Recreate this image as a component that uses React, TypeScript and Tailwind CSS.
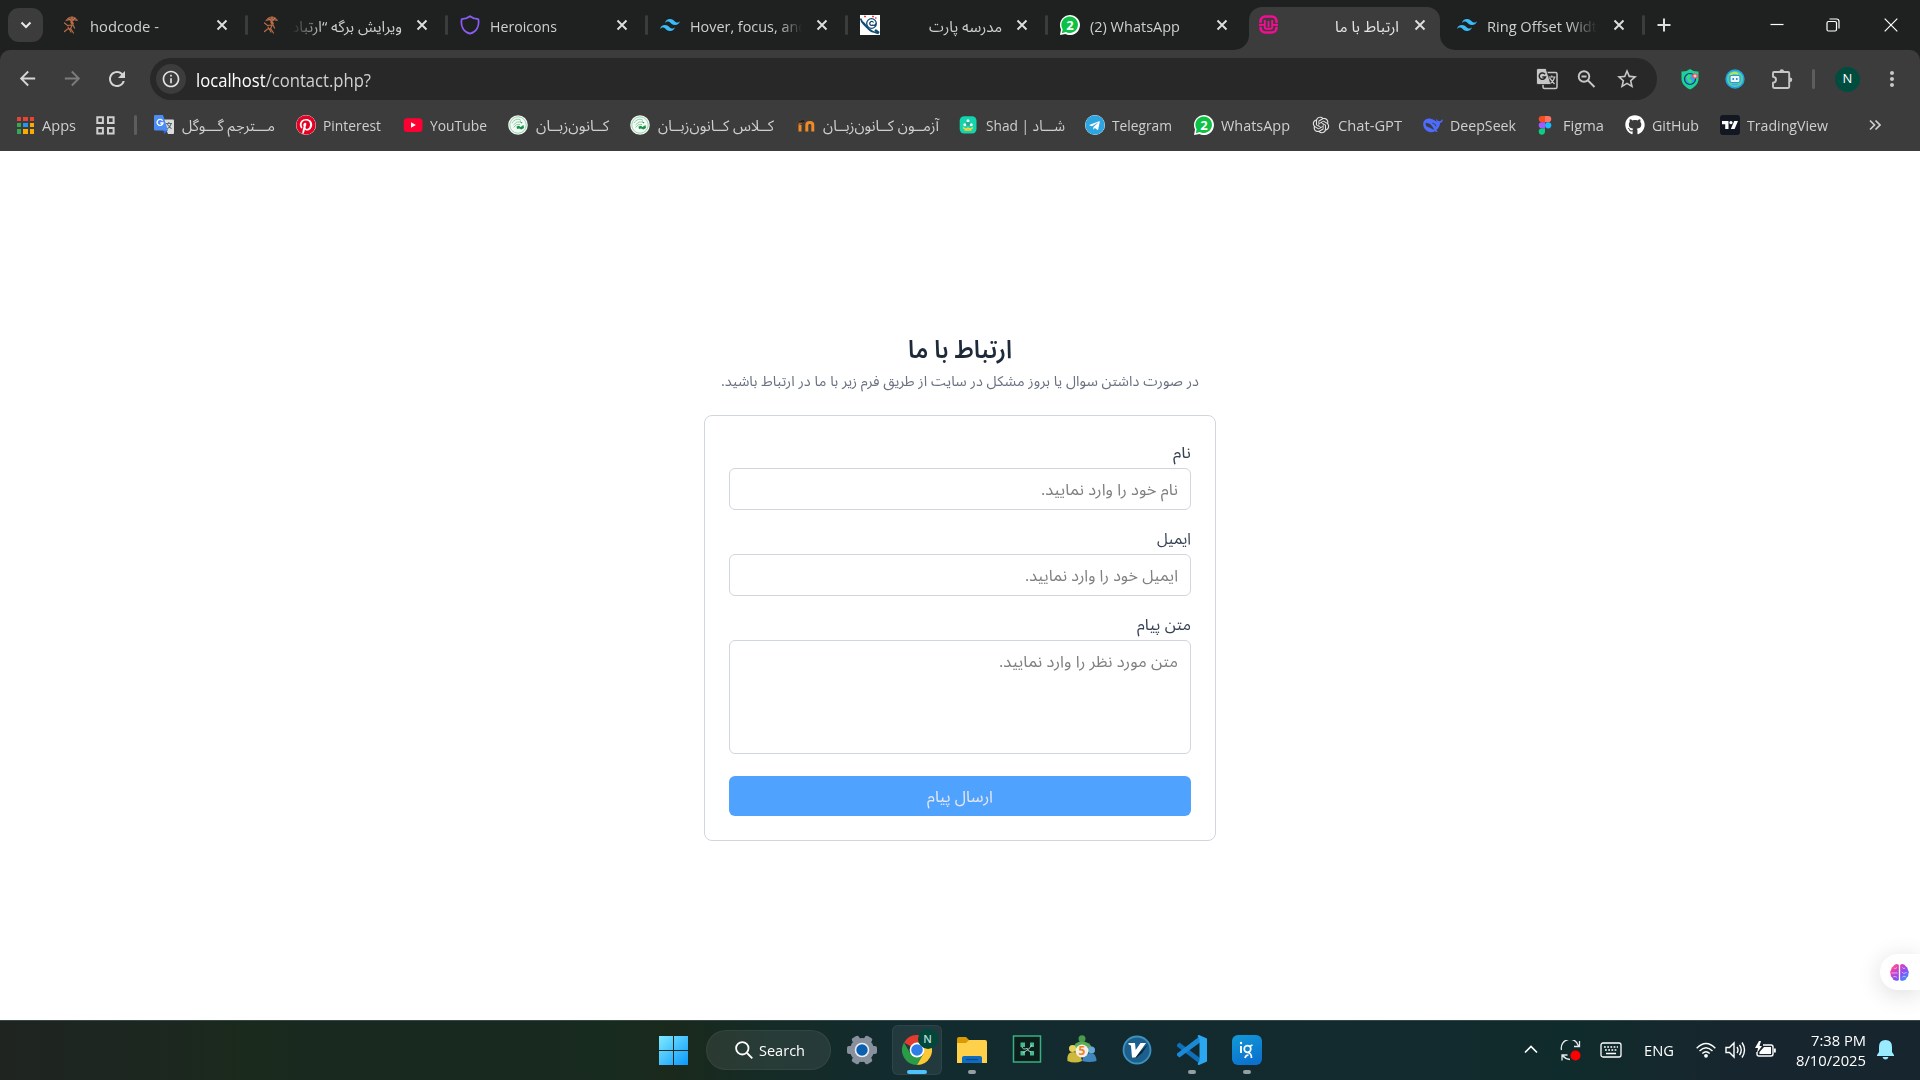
import React, { useLayoutEffect, useRef } from "react";
import {
  MdArrowBack,
  MdArrowForward,
  MdRefresh,
  MdInfoOutline,
  MdStarBorder,
  MdMoreVert,
} from "react-icons/md";
import { FaPinterest, FaTelegram, FaGithub } from "react-icons/fa";
import { RiOpenaiFill } from "react-icons/ri";
import { SiTailwindcss, SiTradingview } from "react-icons/si";

/** Single line of text that is stretched or narrowed to the width of its box. */
function Fit({ children, className = "", rtl = false }: { children: React.ReactNode; className?: string; rtl?: boolean }) {
  const outer = useRef<HTMLSpanElement>(null);
  const inner = useRef<HTMLSpanElement>(null);
  useLayoutEffect(() => {
    if (!outer.current || !inner.current) return;
    inner.current.style.transform = "none";
    const natural = inner.current.getBoundingClientRect().width;
    const wanted = outer.current.getBoundingClientRect().width;
    if (natural > 0) inner.current.style.transform = `scaleX(${wanted / natural})`;
  });
  return (
    <span ref={outer} dir="ltr" className={`flex shrink-0 whitespace-nowrap ${className}`}>
      <span ref={inner} dir={rtl ? "rtl" : "ltr"} className="inline-block shrink-0 origin-left">
        {children}
      </span>
    </span>
  );
}

/* ---------- favicons ---------- */

const Hodcode = () => (
  <svg viewBox="0 0 20 20" className="size-5" fill="none" stroke="#b96c45" strokeWidth="1.2" strokeLinecap="round">
    <path d="M6 5.500C8 1 15 .5 17.500 5.500L14.500 5 12 6 9.500 5Z" fill="#8f5236" strokeWidth=".8" />
    <path d="M11.500 7l1 1.500" strokeWidth="2.600" />
    <path d="M4.500 8l3 2.500 5.500-.5 1.500 3M12 10l-1.500 4M10.500 13.500l-3 .5-3 2.500M10.500 13.500l3 4.500M8 12l3 5" />
    <path d="M8.500 4l2 1M12 2v3M15 3l-2 2" stroke="#e09a72" strokeWidth=".6" />
  </svg>
);

const Heroicon = () => (
  <svg viewBox="0 0 20 20" className="size-5" fill="none" stroke="#8b5cf6" strokeWidth="1.8" strokeLinejoin="round">
    <path d="M10 1.300C12.500 3.300 15 4 18.300 4.100C19.500 10.500 17 16.500 10 18.700C3 16.500.5 10.500 1.700 4.100C5 4 7.500 3.300 10 1.300Z" />
  </svg>
);

const Part = () => (
  <svg viewBox="0 0 20 20" className="size-5" fill="none">
    <path fill="#fff" d="M0 0h20v20H0z" />
    <path d="M.5 3.500c2 6 9 13 18 15M1 7c4-2 5 9 13 10" stroke="#0f4c75" strokeWidth="1.600" />
    <circle cx="11.500" cy="8.500" r="4.800" stroke="#0f4c75" strokeWidth="1.300" />
    <path d="M13.500 7.500a2 2 0 1 0-.5 2.500q2 1 3-1.500" stroke="#123c69" strokeWidth="1.200" />
    <path d="M15 15l4 3" stroke="#0f4c75" strokeWidth="2.600" />
    <path d="M4 1.500h2M12 1.500h2M15 3h1.500" stroke="#ef3e4a" strokeWidth="1.300" />
  </svg>
);

const WhatsApp = () => (
  <svg viewBox="0 0 20 20" className="size-5">
    <path fill="#fff" d="M0 20l1-5.500A10 10 0 1 1 5.500 19Z" />
    <path fill="#0cc143" d="M1.800 18.200l.9-3.900A8.300 8.300 0 1 1 5.800 17.100Z" />
    <text x="10" y="14.700" textAnchor="middle" fontFamily="Open Sans" fontWeight="700" fontSize="13" fill="#fff">2</text>
  </svg>
);

const Wamp = () => (
  <svg viewBox="0 0 20 20" className="size-5" fill="none" stroke="#f70a94">
    <rect x="1.500" y="1.500" width="16" height="16" rx="4.800" strokeWidth="2.600" />
    <path d="M5.800 5v7.500q0 1.200 1.200 1.200h5q1.200 0 1.200-1.200V5M9.500 6v6" strokeWidth="1.900" />
    <path d="M-.2 8.300h4.500M14.800 8.300h4.500M-.2 11.300h4.500M14.800 11.300h4.500" stroke="#3c3c3c" strokeWidth="1" />
    <path d="M0 9.800h5M14 9.800h5" strokeWidth="1.700" />
  </svg>
);

const TranslateColor = () => (
  <svg viewBox="0 0 20 20" className="size-5">
    <path fill="#dcdcdc" d="M8 4.500h11q1 0 1 1V18q0 1-1 1h-5Z" />
    <path d="M11.500 8.500h6.500M14.800 7v1.500M13 9l4.500 5M17 9q-1 3.500-4 5" stroke="#5f6b70" strokeWidth="1.100" fill="none" />
    <path fill="#3367d6" d="M9 15h5l-3.500 4Z" />
    <path fill="#4b8cf5" d="M1 0h8l5 15.500H1q-1 0-1-1V1q0-1 1-1Z" />
    <path d="M8.600 5.800A3 3 0 1 0 9 8H6.300" stroke="#fff" strokeWidth="1.300" fill="none" />
  </svg>
);

const YouTube = () => (
  <svg viewBox="0 0 20 20" className="size-5">
    <rect x=".7" y="3.300" width="18.800" height="13.600" rx="3.500" fill="#ff0033" />
    <path fill="#fff" d="M8 7.200v5.600l4.800-2.800Z" />
  </svg>
);

const Kanoon = () => (
  <svg viewBox="0 0 20 20" className="size-5" fill="none">
    <circle cx="10" cy="10" r="9.800" fill="#f4faf5" />
    <circle cx="10" cy="10" r="8.200" stroke="#8fcca4" strokeWidth=".9" />
    <path d="M4 8C6 4.500 10.500 3 13 5.500M5.500 10q3-4.500 7.500-3M5.500 12.500Q8 8.500 12 9.500" stroke="#6fc08d" strokeWidth=".8" />
    <path fill="#159447" d="M8.500 11.500l2.500-.7 1.500 1.200 3-2 .5 3-2.500 1.500-2.500-1-2 .5ZM12 6.500l2.500 1-1 1Z" />
  </svg>
);

const Moodle = () => (
  <svg viewBox="0 0 20 20" className="size-5" fill="none">
    <path d="M5 16.500V10M11.800 16.500V10q0-2.600 3-2.600 3 0 3 2.600v6.500M11.800 10.500V16.500" stroke="#ef8a24" strokeWidth="3" />
    <path d="M4 10q.5-2 3-2.500" stroke="#b9662a" strokeWidth="2" />
    <path d="M1 7l7-2.500 3 1.500-3 2ZM1.300 7.500v5" stroke="#4e4036" fill="#221d1a" strokeWidth="1" />
  </svg>
);

const Shad = () => (
  <svg viewBox="0 0 20 20" className="size-5" fill="none">
    <rect x=".7" y="1.300" width="16.800" height="17.200" rx="4.500" fill="#12d5ae" />
    <path d="M9 5l3.700 5.500H5.300Z" fill="#2aa491" />
    <circle cx="9" cy="5.800" r="1.500" fill="#eefdfa" />
    <circle cx="5.800" cy="9.800" r="1.500" fill="#eefdfa" />
    <circle cx="12.300" cy="9.800" r="1.500" fill="#eefdfa" />
    <path d="M4 12.500q2.500 2.500 5 .5 2.500 2 5-.5M5.500 15h7" stroke="#f3d13d" strokeWidth="1.500" />
  </svg>
);

const DeepSeek = () => (
  <svg viewBox="0 0 20 20" className="size-5">
    <path
      fill="#4d6bfe"
      d="M19.800 4.500c-.8-.1-1.200.5-1.700 1-.7 1-2.200 1-3.300.3-.8-1-1-.9-1.100-2.400-.6.800-.6 2.300.2 3.300-1.300-.3-2-1.300-3.300-1.900C8.500 4 7.500 3.400 5.900 3.500 2 3.600 0 6.500.2 9.600c.2 4 3.600 7.700 7.800 7.700 1.500 0 2.800-.4 3.800-1 1 .3 2.200.8 3 .5-.7-.5-1-1-1.300-1.900 2.700-2.200 3.300-4.300 3.600-6.900 1.600-.3 2.700-1.400 2.700-3.500Z"
    />
    <path fill="#3c3c3c" d="M2.500 8.200c4-.6 6.500 2.300 8.800 6.500-2.500-.3-3.500-2-5-2.200C4 12.200 2.500 10.500 2.500 8.200Z" />
    <path fill="none" stroke="#3c3c3c" strokeWidth="1" d="M9.500 8.300c1.500-.2 3 1 3.500 3" />
  </svg>
);

const Figma = () => (
  <svg viewBox="0 0 20 20" className="size-5">
    <path fill="#f24e1e" d="M7 1H3.800a3.100 3.100 0 0 0 0 6.200H7Z" />
    <path fill="#ff7262" d="M7 1h3.200a3.100 3.100 0 0 1 0 6.200H7Z" />
    <path fill="#a259ff" d="M7 7.200H3.800a3.100 3.100 0 0 0 0 6.200H7Z" />
    <circle cx="10.200" cy="10.300" r="3.100" fill="#1abcfe" />
    <path fill="#0acf83" d="M3.800 13.400H7v3.200a3.150 3.150 0 1 1-3.200-3.200Z" />
  </svg>
);

const AppsGrid = () => (
  <span className="grid size-[17px] grid-cols-3 grid-rows-3 gap-[2px]">
    <i className="bg-[#ea4335]" /><i className="bg-[#ea4335]" /><i className="bg-[#ea4335]" />
    <i className="bg-[#34a853]" /><i className="bg-[#2196f3]" /><i className="bg-[#f9ab00]" />
    <i className="bg-[#34a853]" /><i className="bg-[#f9ab00]" /><i className="bg-[#f9ab00]" />
  </span>
);

/* ---------- tab strip ---------- */

const Close = () => (
  <svg viewBox="0 0 12 12" className="size-3 shrink-0 text-[#dedede]" stroke="currentColor" strokeWidth="1.900">
    <path d="M1.500 1.500l9 9M10.500 1.500l-9 9" />
  </svg>
);

const Tailwind = () => <SiTailwindcss className="size-5 text-[#38bdf8]" />;

type TabData = { icon: React.ReactNode; title: string; width: string; rtl?: boolean; fade?: string; active?: boolean };

const tabs: TabData[] = [
  { icon: <Hodcode />, title: "hodcode -", width: "w-[69px]" },
  { icon: <Hodcode />, title: "ویرایش برگه “ارتباد", width: "w-[110px]", rtl: true, fade: "[mask-image:linear-gradient(to_right,transparent,black_30px)]" },
  { icon: <Heroicon />, title: "Heroicons", width: "w-[67px]" },
  { icon: <Tailwind />, title: "Hover, focus, and", width: "w-[117px]", fade: "[mask-image:linear-gradient(to_left,transparent_5px,black_28px)]" },
  { icon: <Part />, title: "مدرسه پارت", width: "w-[73px]", rtl: true },
  { icon: <WhatsApp />, title: "(2) WhatsApp", width: "w-[90px]" },
  { icon: <Wamp />, title: "ارتباط با ما", width: "w-[64px]", rtl: true, active: true },
  { icon: <Tailwind />, title: "Ring Offset Widt", width: "w-[110px]", fade: "[mask-image:linear-gradient(to_left,transparent,black_28px)]" },
];

function Tab({ icon, title, width, rtl, fade, active }: TabData) {
  const label = (
    <span className={`flex w-[112px] shrink-0 pt-px ${rtl ? "justify-end" : ""}`}>
      <Fit rtl={rtl} className={`${width} ${fade ?? ""}`}>{title}</Fit>
    </span>
  );
  if (active) {
    return (
      <div className="relative ml-px mr-[5px] mt-[7px] flex h-[43px] w-[191px] shrink-0 items-center rounded-t-[13px] bg-[#3c3c3c] pb-[7px] pl-[10px] text-[#e6e6e6]">
        <svg viewBox="0 0 15 15" className="absolute bottom-0 right-full size-[15px]" fill="#3c3c3c"><path d="M15 0v15H0A15 15 0 0 0 15 0Z" /></svg>
        <svg viewBox="0 0 15 15" className="absolute bottom-0 left-full size-[15px]" fill="#3c3c3c"><path d="M0 0v15h15A15 15 0 0 1 0 0Z" /></svg>
        {icon}
        <span className="w-2" />
        {label}
        <span className="w-[15px]" />
        <Close />
      </div>
    );
  }
  return (
    <div className="flex h-[50px] w-[200px] shrink-0 items-center pl-3 text-[#cfcfcf]">
      {icon}
      <span className="w-[10px]" />
      {label}
      <span className="w-[14px]" />
      <Close />
      <span className={`ml-[17px] h-5 w-[3px] rounded ${title.startsWith("(2)") ? "" : "bg-[#3c3c3c]"}`} />
    </div>
  );
}

function TabStrip() {
  return (
    <div className="flex h-[50px] items-start bg-[#1f2120] text-[15px] leading-[20px]">
      <div className="ml-2 mr-[5px] mt-2 flex h-[34px] w-[35px] shrink-0 items-center justify-center rounded-[11px] bg-[#3c3c3c]">
        <svg viewBox="0 0 12 12" className="size-3" fill="none" stroke="#e8e8e8" strokeWidth="2"><path d="M1.500 3.500L6 8l4.500-4.500" /></svg>
      </div>
      {tabs.map((t, i) => <Tab key={i} {...t} />)}
      <svg viewBox="0 0 14 14" className="ml-[12px] mt-[18px] size-[14px] shrink-0" stroke="#dedede" strokeWidth="2"><path d="M7 .5v13M.5 7h13" /></svg>
      <div className="ml-auto flex h-[49px] items-center pr-[22px] text-white">
        <svg viewBox="0 0 14 14" className="mr-[42px] size-[14px]" stroke="currentColor" strokeWidth="1.200"><path d="M.5 6.500h13" /></svg>
        <svg viewBox="0 0 14 14" className="mr-[44px] size-[14px]" fill="none" stroke="currentColor" strokeWidth="1.200">
          <rect x="1" y="3.500" width="9.500" height="9.500" rx="1.500" /><path d="M3.500 1h7Q13 1 13 3.500v7" />
        </svg>
        <svg viewBox="0 0 14 14" className="size-[14px]" stroke="currentColor" strokeWidth="1.200"><path d="M.7.7l12.600 12.600M13.300.7L.7 13.300" /></svg>
      </div>
    </div>
  );
}

/* ---------- toolbar ---------- */

function Toolbar() {
  return (
    <div className="bg-[#1f2120]">
      <div className="flex h-[50px] items-start rounded-t-[10px] bg-[#3c3c3c] pt-2 text-[#c7c7c7]">
        <div className="flex h-[42px] w-[150px] shrink-0 items-center pb-px">
          <MdArrowBack className="ml-[16px] size-[23px] text-[#d5d5d5]" />
          <MdArrowForward className="ml-[22px] size-[23px] text-[#7c7c7c]" />
          <MdRefresh className="ml-[21px] size-6 text-[#d5d5d5]" />
        </div>
        <div className="flex h-[42px] w-[1507px] shrink-0 items-center rounded-full bg-[#282828] pl-[6px]">
          <span className="flex size-[30px] items-center justify-center rounded-full bg-[#3c3c3c]">
            <MdInfoOutline className="size-5 text-[#e3e3e3]" />
          </span>
          <Fit className="ml-[10px] w-[175px] pt-px text-[18px] leading-[24px] text-[#d0d0d0]">
            <span className="text-white">localhost</span>/contact.php?
          </Fit>
          <svg viewBox="0 0 22 22" className="ml-auto size-[22px]" fill="none">
            <rect x="7" y="4.500" width="14" height="16" rx="1.500" stroke="#c7c7c7" strokeWidth="1.500" />
            <path fill="#c7c7c7" stroke="#282828" strokeWidth=".8" d="M2 .5h8l5 16H2Q.5 16.500.5 15V2Q.5.5 2 .5Z" />
            <path d="M9 6.200A3.200 3.200 0 1 0 9.500 9H6.300" stroke="#282828" strokeWidth="1.500" />
            <path d="M12.500 9h7M15.800 7.500V9M13.500 10l5 6M18.500 9.500q-1 4-4 6" stroke="#c7c7c7" strokeWidth="1.200" />
          </svg>
          <svg viewBox="0 0 20 20" className="ml-[19px] size-5" fill="none" stroke="#c7c7c7" strokeWidth="1.900">
            <circle cx="7" cy="7.500" r="5.300" /><path d="M11 11.500l6.500 6.500M4.500 7.500h5" />
          </svg>
          <MdStarBorder className="ml-[18px] mr-[18px] size-6" />
        </div>
        <div className="flex h-[42px] flex-1 items-center">
          <svg viewBox="0 0 20 22" className="ml-[23px] h-[22px] w-5">
            <path fill="#19d59b" d="M10 1q4 3 8.500 2.500V12q-1 6-8.500 9.500Q2.500 18 1.500 12V3.500Q6 4 10 1Z" />
            <circle cx="10" cy="11" r="5.500" fill="#2da8e8" stroke="#123d56" strokeWidth="1.200" />
            <path fill="#36dd77" d="M6 9l3-3 2 2-2 3 3 1-1 3.500-3-2Z" />
            <circle cx="15" cy="8" r="2.700" fill="#f2545b" /><path d="M15 6.500v3M13.500 8h3" stroke="#fff" strokeWidth=".9" />
          </svg>
          <svg viewBox="0 0 20 20" className="ml-[25px] size-5">
            <circle cx="10" cy="10" r="8.900" fill="#55cf9c" stroke="#1fa0ef" strokeWidth="1.600" />
            <path d="M5 6q4-4 8-1" stroke="#b5e655" strokeWidth="2" fill="none" />
            <rect x="5" y="6.500" width="10" height="7" rx="1.500" fill="#e8f6ff" stroke="#2f93dd" strokeWidth="1.200" />
            <circle cx="8.200" cy="10" r=".9" fill="#2076bd" /><circle cx="11.800" cy="10" r=".9" fill="#2076bd" /><path d="M7 15.500h6" stroke="#3fa9e8" strokeWidth="1.500" />
          </svg>
          <svg viewBox="0 0 24 24" className="ml-[25px] size-6" fill="none" stroke="#c7c7c7" strokeWidth="1.900" strokeLinejoin="round">
            <path d="M4 5h14q1.200 0 1.200 1.200v13.600Q19.200 21 18 21H4.200q-1.200 0-1.200-1.200v-4q3-.3 3-3t-3-3V6.200Q3 5 4 5Z" />
            <path fill="#c7c7c7" stroke="none" d="M9.500 4.500a2.300 2.300 0 0 1 4.600 0ZM20 10.500a2.300 2.300 0 0 1 0 4.600Z" />
          </svg>
          <span className="ml-[18px] h-5 w-[3px] rounded bg-[#5d5d5d]" />
          <span className="ml-[20px] flex size-[25px] items-center justify-center rounded-full bg-[#004d40] text-[13px] text-white">N</span>
          <MdMoreVert className="ml-[20px] size-6" />
        </div>
      </div>
    </div>
  );
}

/* ---------- bookmarks ---------- */

type Mark = { slot: string; icon: React.ReactNode; text: string; width: string; rtl?: boolean };

const marks: Mark[] = [
  { slot: "w-[142px]", icon: <TranslateColor />, text: "مـــترجم گـــوگل", width: "w-[93px]", rtl: true },
  { slot: "w-[107px]", icon: <FaPinterest className="size-5 rounded-full bg-white text-[#e60023]" />, text: "Pinterest", width: "w-[58px]" },
  { slot: "w-[105px]", icon: <YouTube />, text: "YouTube", width: "w-[57px]" },
  { slot: "w-[122px]", icon: <Kanoon />, text: "کــانون‌زبــان", width: "w-[73px]", rtl: true },
  { slot: "w-[165px]", icon: <Kanoon />, text: "کــلاس کــانون‌زبــان", width: "w-[116px]", rtl: true },
  { slot: "w-[164px]", icon: <Moodle />, text: "آزمــون کــانون‌زبــان", width: "w-[116px]", rtl: true },
  { slot: "w-[126px]", icon: <Shad />, text: "Shad | شـــاد", width: "w-[79px]" },
  { slot: "w-[109px]", icon: <FaTelegram className="size-5 rounded-full bg-white text-[#2ca5e0]" />, text: "Telegram", width: "w-[60px]" },
  { slot: "w-[117px]", icon: <WhatsApp />, text: "WhatsApp", width: "w-[69px]" },
  { slot: "w-[112px]", icon: <RiOpenaiFill className="size-5 text-[#e4e4e4]" />, text: "Chat-GPT", width: "w-[64px]" },
  { slot: "w-[115px]", icon: <DeepSeek />, text: "DeepSeek", width: "w-[66px]" },
  { slot: "w-[87px]", icon: <Figma />, text: "Figma", width: "w-[41px]" },
  { slot: "w-[95px]", icon: <FaGithub className="size-5 text-white" />, text: "GitHub", width: "w-[47px]" },
  {
    slot: "w-[110px]",
    icon: <span className="flex size-5 items-center justify-center rounded-[3px] bg-[#131722]"><SiTradingview className="size-4 text-white" /></span>,
    text: "TradingView",
    width: "w-[81px]",
  },
];

function Bookmarks() {
  return (
    <div className="flex h-[51px] items-center bg-[#3c3c3c] pb-px pl-[17px] text-[15px] leading-[20px] text-[#cfcfcf]">
      <AppsGrid />
      <Fit className="ml-[8px] w-[34px]">Apps</Fit>
      <svg viewBox="0 0 19 19" className="ml-5 size-[19px]" fill="none" stroke="#cfcfcf" strokeWidth="2">
        <path d="M1.300 1.300h5.600v5.600H1.300ZM12 1.300h5.600v5.600H12ZM1.300 12h5.600v5.600H1.300ZM12 12h5.600v5.600H12Z" />
      </svg>
      <span className="ml-[19px] mr-[17px] h-5 w-[3px] rounded bg-[#5d5d5d]" />
      {marks.map((m) => (
        <div key={m.text} className={`flex shrink-0 items-center ${m.slot}`}>
          {m.icon}
          <Fit rtl={m.rtl} className={`${m.text === "Figma" ? "ml-[5px]" : m.rtl ? "ml-2" : "ml-[7px]"} ${m.width}`}>{m.text}</Fit>
        </div>
      ))}
      <svg viewBox="0 0 12 12" className="ml-[39px] size-3" fill="none" stroke="#cfcfcf" strokeWidth="1.700"><path d="M1 1.500L5.500 6 1 10.500M6.500 1.500L11 6l-4.500 4.500" /></svg>
    </div>
  );
}

/* ---------- contact page ---------- */

function Field({ label, labelWidth, hint, hintWidth, box }: { label: string; labelWidth: string; hint: string; hintWidth: string; box: string }) {
  return (
    <div className="flex flex-col items-end">
      <Fit rtl className={`h-7 text-[16px] leading-[24px] text-[#364153] ${labelWidth}`}>{label}</Fit>
      <div className={`flex w-full justify-end rounded-md border border-[#d1d5dc] px-3 pt-[8px] text-[16px] leading-[24px] text-[#808080] ${box}`}>
        <Fit rtl className={hintWidth}>{hint}</Fit>
      </div>
    </div>
  );
}

function Contact() {
  return (
    <main className="flex h-[869px] flex-col bg-white">
      <div className="mx-auto mt-[179px] flex w-[512px] flex-col items-center">
        <h1 className="flex h-[36px] items-center text-[25px] font-semibold leading-[36px] text-[#1e2939]">
          <Fit rtl className="w-[104px]">ارتباط با ما</Fit>
        </h1>
        <p className="mt-[5px] pr-px text-[14px] leading-[20px] text-[#6a7282]">
          <Fit rtl className="w-[478px]">در صورت داشتن سوال یا بروز مشکل در سایت از طریق فرم زیر با ما در ارتباط باشید.</Fit>
        </p>
        <div className="mt-[24px] flex h-[426px] w-full flex-col rounded-lg border border-[#d1d5dc] px-6 pt-6">
          <div className="flex flex-col gap-4">
            <Field label="نام" labelWidth="w-[18px]" hint="نام خود را وارد نمایید." hintWidth="w-[137px]" box="h-[42px]" />
            <Field label="ایمیل" labelWidth="w-[34px]" hint="ایمیل خود را وارد نمایید." hintWidth="w-[153px]" box="h-[42px]" />
            <Field label="متن پیام" labelWidth="w-[54px]" hint="متن مورد نظر را وارد نمایید." hintWidth="w-[179px]" box="h-[114px]" />
          </div>
          <button className="mt-[22px] flex h-10 w-full items-center justify-center rounded-md bg-[#50a2ff] pr-px text-[16px] text-[#e5e7eb]">
            <Fit rtl className="w-[66px]">ارسال پیام</Fit>
          </button>
        </div>
      </div>
      <div className="ml-auto mt-[113px] flex h-9 w-10 items-center rounded-l-full bg-white pl-[10px] shadow-[0_4px_24px_rgba(0,0,0,0.14)]">
        <svg viewBox="0 0 20 20" className="size-[19px]">
          <defs>
            <linearGradient id="brain" x1="0" y1="0" x2="1" y2="1">
              <stop offset="0" stopColor="#ff8a3c" /><stop offset=".25" stopColor="#ee3fae" /><stop offset=".6" stopColor="#8a4df5" /><stop offset="1" stopColor="#22a8ff" />
            </linearGradient>
          </defs>
          <path fill="url(#brain)" d="M9.300 2Q8 .5 6 1.200 4 1.500 3.500 3.500 1 4.500 1.300 7-.5 9 .7 11.500.3 14 2.500 15.500q.5 2.500 3 3Q8 19.300 9.300 17.800ZM10.700 2Q12 .5 14 1.200q2 .3 2.500 2.300 2.500 1 2.200 3.500 1.800 2 .6 4.500.4 2.500-1.800 4-.5 2.500-3 3-2.500.8-3.800-.7Z" />
          <path d="M4 5.500q2.500 1 3.500-1M1.500 10.500h6.500M3.500 14.500q2-1 4 .7M16 5.500q-2.500 1-3-1M17.500 10l-3 1-2-1.500M16.500 14.500q-2-1.500-3.500.5" stroke="#fff" strokeWidth=".6" fill="none" />
        </svg>
      </div>
    </main>
  );
}

/* ---------- taskbar ---------- */

function AppSlot({ children, dot = false }: { children: React.ReactNode; dot?: boolean }) {
  return (
    <div className="flex h-[60px] w-[55px] shrink-0 flex-col items-center pt-[14px]">
      {children}
      <span className={`mt-[5px] h-1 w-2 rounded-full ${dot ? "bg-[#92a0a3]" : ""}`} />
    </div>
  );
}

const Chrome = () => (
  <svg viewBox="0 0 30 30" className="size-[30px]">
    <path fill="#e33b2e" d="M15 15L2 7.500A15 15 0 0 1 28 7.500H15Z" />
    <path fill="#2a9b47" d="M15 15L8.500 18.800 2 7.500A15 15 0 0 0 15 30l6.500-11.200Z" />
    <path fill="#fcc934" d="M15 7.500h13A15 15 0 0 1 15 30l6.500-11.200Z" />
    <circle cx="15" cy="15" r="7.400" fill="#fff" /><circle cx="15" cy="15" r="5.800" fill="#2f7de9" />
  </svg>
);

function Taskbar() {
  return (
    <footer className="flex h-[60px] items-start border-t border-[#34474a] bg-[linear-gradient(90deg,#1f2420_0%,#1c2720_8%,#1a2a1c_13%,#19291f_16%,#18291f_24%,#182b1f_32%,#1a291c_35%,#152b26_40%,#122b2f_47%,#132a2f_70%,#102b2b_82%,#17262e_90%,#17262e_100%)] text-white">
      <svg viewBox="0 0 29 29" className="ml-[659px] mt-[15px] size-[29px] shrink-0">
        <defs><linearGradient id="win" x1="0" y1="0" x2="1" y2="1" gradientUnits="objectBoundingBox"><stop offset="0" stopColor="#7eeaff" /><stop offset="1" stopColor="#0b98fb" /></linearGradient></defs>
        <path fill="url(#win)" d="M0 0h14v14H0ZM15 0h14v14H15ZM0 15h14v14H0ZM15 15h14v14H15Z" />
      </svg>
      <div className="ml-[18px] mt-[9px] flex h-10 w-[125px] shrink-0 items-center rounded-full border border-white/5 bg-white/[0.08] pl-[28px]">
        <svg viewBox="0 0 18 18" className="size-[18px]" fill="none" stroke="#fff" strokeWidth="1.800"><circle cx="7.300" cy="7.300" r="6.200" /><path d="M12 12l5.300 5.300" /></svg>
        <Fit className="ml-[6px] w-[46px] pt-px text-[15px]">Search</Fit>
      </div>
      <div className="ml-[3px] flex">
        <AppSlot>
          <svg viewBox="0 0 30 30" className="size-[30px]">
            <g fill="#87909c">
              <circle cx="15" cy="15" r="12" />
              <rect x="0" y="11" width="30" height="8" rx="2" />
              <rect x="0" y="11" width="30" height="8" rx="2" transform="rotate(60 15 15)" />
              <rect x="0" y="11" width="30" height="8" rx="2" transform="rotate(120 15 15)" />
            </g>
            <circle cx="15" cy="15" r="7.300" fill="#e9eef4" /><circle cx="15" cy="15" r="5.700" fill="#0b5fae" />
          </svg>
        </AppSlot>
        <div className="mx-[2.500px] mt-1 flex h-[50px] w-[50px] shrink-0 flex-col items-center rounded-md border border-white/[0.06] bg-white/[0.07] pt-[9px]">
          <div className="relative">
            <Chrome />
            <span className="absolute -right-[6px] -top-[6px] flex size-[20px] items-center justify-center rounded-full bg-[#00473c] text-[11px] font-semibold text-[#b8d8d0]">N</span>
          </div>
          <span className="mt-[5px] h-1 w-5 shrink-0 rounded-full bg-[#4cc2ff]" />
        </div>
        <AppSlot dot>
          <svg viewBox="0 0 30 30" className="size-[30px]">
            <path fill="#d99a05" d="M0 4q0-2 2-2h7l3 3v7H0Z" />
            <path fill="#ffd04a" d="M0 8h9l3-3h16q2 0 2 2v21H0Z" />
            <path fill="#0f6cbf" d="M5 28v-5q0-2 2-2h16q2 0 2 2v5Z" /><path d="M9 24.500h12" stroke="#0a4a8c" strokeWidth="1.200" />
          </svg>
        </AppSlot>
        <AppSlot>
          <svg viewBox="0 0 30 30" className="size-[30px]" fill="none">
            <rect x="1.500" y="1" width="27" height="26" fill="#0d1d1a" stroke="#37b084" strokeWidth="1.500" />
            <path fill="#45b98f" d="M8.500 7.500h4.500v4.500H8.500ZM18 7.500h4V12h-4ZM8.500 16h4.500v4.500H8.500ZM18 16h4v4.500h-4Z" />
            <path d="M10 12q1 3 5 1.500M20 10q-2 4-9 8M15 13q0 3 4 4" stroke="#a9e0cb" strokeWidth=".9" />
          </svg>
        </AppSlot>
        <AppSlot>
          <svg viewBox="0 0 30 30" className="size-[30px]">
            <circle cx="15" cy="3.700" r="3.500" fill="#4a9a4c" /><path fill="#5bab5a" d="M6 14q1-7.500 9-7.500T25 13l-4 4H9Z" />
            <circle cx="5.500" cy="13.500" r="3.500" fill="#e9d45a" /><path fill="#cdb93c" d="M.5 26q-1-9 5.500-9 8 0 9 9-7 3-14.500 0Z" />
            <circle cx="24.500" cy="15" r="3.500" fill="#69a9d8" /><path fill="#3f86bd" d="M15 26q2-8 9-8 5 0 5.500 8-7 2-14.500 0Z" />
            <circle cx="15" cy="16" r="6.500" fill="#f4f0e8" />
            <text x="15" y="20.300" textAnchor="middle" fontFamily="Open Sans" fontWeight="700" fontSize="12" fill="#f08424">5</text>
          </svg>
        </AppSlot>
        <AppSlot>
          <svg viewBox="0 0 30 30" className="size-[30px]">
            <circle cx="15" cy="15" r="13.500" fill="#1c5f8c" stroke="#3d91bf" strokeWidth="1.800" />
            <path fill="#0a2233" d="M12 23l14-14-6 9-6 5Z" />
            <path fill="#fff" d="M6.500 8h6.500l.7 7L18.500 8h5.500L13.500 22.500H10L9 11q-.3-1.500-2.500-1.500Z" />
          </svg>
        </AppSlot>
        <AppSlot dot>
          <svg viewBox="0 0 30 30" className="size-[30px]">
            <path fill="#0f6fb8" d="M0 9.500l2.500-2L23 23v6L0 11.500Z" />
            <path fill="#1a8ad6" d="M0 20.500l2.500 2L23 7.500V1L0 18.500Z" />
            <path fill="#2ba7f2" d="M22 0l8 3.500v23L22 30q-1 0-1.500-1L22.500 26V4L20.500 1Q21 0 22 0Z" />
          </svg>
        </AppSlot>
        <AppSlot dot>
          <svg viewBox="0 0 30 30" className="size-[30px]">
            <defs><linearGradient id="ig" x1="0" y1="0" x2=".4" y2="1"><stop offset="0" stopColor="#129ad6" /><stop offset="1" stopColor="#0b73cf" /></linearGradient></defs>
            <rect width="30" height="30" rx="6" fill="url(#ig)" />
            <path d="M9 11V18" stroke="#fff" strokeWidth="1.900" /><circle cx="9" cy="8" r="1.200" fill="#fff" />
            <g fill="none" stroke="#fff" strokeWidth="1.700"><circle cx="15.500" cy="14" r="3.300" /><path d="M17.300 11.500l3.200-1.500M16 17.500q3.500.7 3.500 5.500M16.500 20q-3 .3-3.500 3" /></g>
          </svg>
        </AppSlot>
      </div>
      <div className="ml-auto flex h-[58px] shrink-0 items-center">
        <svg viewBox="0 0 14 14" className="size-[14px]" fill="none" stroke="#fff" strokeWidth="1.700"><path d="M1 9.500l6-6 6 6" /></svg>
        <svg viewBox="0 0 21 21" className="ml-[22px] size-[21px]" fill="none" stroke="#e4e9e9" strokeWidth="1.300">
          <path d="M1.500 10A8.500 8.500 0 0 1 18.500 6M19.500 1v5.500h-5.500M10 19.500Q5.500 19 2.500 15.500M2 20.500V15h5.500" />
          <circle cx="15.500" cy="15.500" r="5" fill="#f00" stroke="none" />
        </svg>
        <svg viewBox="0 0 22 16" className="ml-[19px] h-4 w-[22px]" fill="none" stroke="#fff" strokeWidth="1.300">
          <rect x="1" y="1" width="20" height="14" rx="2" />
          <path d="M4 5h14M5 8h12" strokeDasharray="1.800 1.400" strokeWidth="1.700" /><path d="M6 11.500h10" strokeWidth="1.500" />
        </svg>
        <Fit className="ml-[22px] w-[30px] pt-px text-[15px]">ENG</Fit>
        <svg viewBox="0 0 20 16" className="ml-[22px] h-4 w-5" fill="none" stroke="#fff" strokeWidth="1.400">
          <path d="M.7 6.200q9.300-9.500 18.600 0M3.500 9q6.500-6.500 13 0M6.300 11.500q3.700-3.500 7.400 0" /><circle cx="10" cy="13.800" r="1.900" fill="#fff" stroke="none" />
        </svg>
        <svg viewBox="0 0 21 18" className="ml-[9px] h-[18px] w-[21px]" fill="none" stroke="#fff" strokeWidth="1.400">
          <path d="M1 6.500h3.500L9 2v14l-4.500-4.500H1ZM12 6q2 3 0 6M14.500 3.800q3.500 5.200 0 10.400M17 1.500q5 7.500 0 15" />
        </svg>
        <svg viewBox="0 0 21 18" className="ml-[9px] h-[18px] w-[21px]" fill="none" stroke="#fff" strokeWidth="1.400">
          <path d="M8 4h8q2 0 2 2v7q0 2-2 2H4q-2 0-2-2v-2" /><path fill="#fff" stroke="none" d="M9 6h7v7H4.500v-2ZM19 7.500h1.800v4H19ZM4 0L0 7h3l-1 5 5-7H4.500L6 0Z" />
        </svg>
        <div className="ml-5 flex flex-col items-end text-[15px] leading-[20px]">
          <Fit className="w-[55px]">7:38 PM</Fit>
          <Fit className="w-[70px]">8/10/2025</Fit>
        </div>
        <svg viewBox="0 0 17 20" className="ml-[11px] mr-[26px] h-5 w-[17px]" fill="#99ebff">
          <path d="M8.500 0q6.500 0 6.500 7v5l2 3v1H0v-1l2-3V7q0-7 6.500-7ZM5.500 17h6q-.8 2.500-3 2.500t-3-2.500Z" />
        </svg>
      </div>
    </footer>
  );
}

export default function App() {
  return (
    <div className="h-[1080px] w-[1920px] overflow-hidden bg-white font-['Open_Sans','Noto_Sans_Arabic','DejaVu_Sans',sans-serif]">
      <TabStrip />
      <Toolbar />
      <Bookmarks />
      <Contact />
      <Taskbar />
    </div>
  );
}
